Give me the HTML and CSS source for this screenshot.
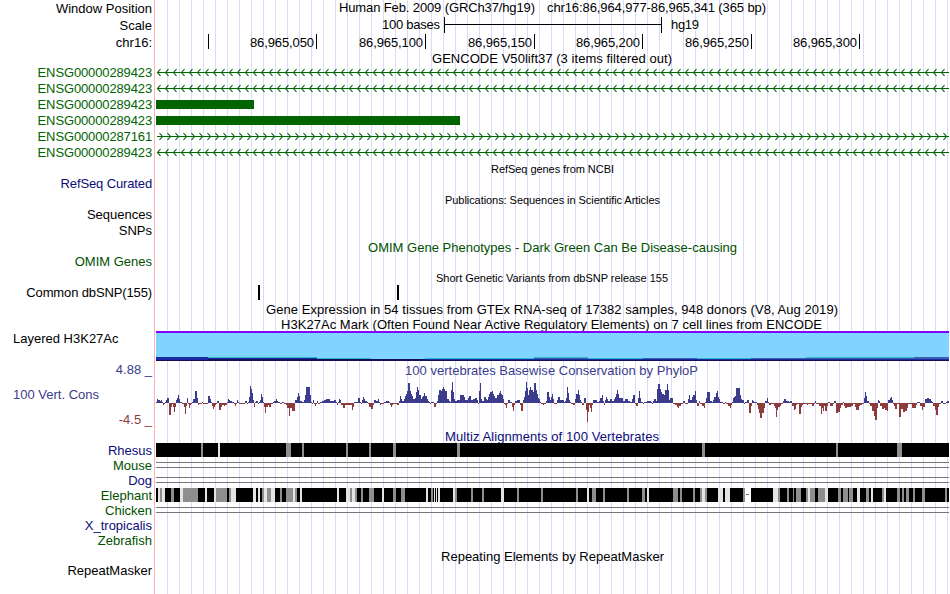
FILE: index.html
```
<!DOCTYPE html>
<html lang="en">
<head>
    <meta charset="UTF-8">
    <title>chr16:86,964,977-86,965,341</title>
    <link rel="stylesheet" href="styles.css">
</head>
<body>
    <!-- arrow patterns shared by the gene rows -->
    <svg class="defs">
        <defs>
            <pattern id="arrows-left" x="156" y="0" width="8" height="16" patternUnits="userSpaceOnUse">
                <path class="chevron" d="M4.5 5.2L1.5 8.5L4.5 11.8"/>
            </pattern>
            <pattern id="arrows-right" x="156" y="0" width="8" height="16" patternUnits="userSpaceOnUse">
                <path class="chevron" d="M3.5 5.2L6.5 8.5L3.5 11.8"/>
            </pattern>
        </defs>
    </svg>

    <div class="browser">
        <!-- position and ruler -->
        <div class="row h17"><div class="label down1">Window Position</div>
            <svg class="track" viewBox="156 0 793 17">
                <text x="339" y="12" textLength="196">Human Feb. 2009 (GRCh37/hg19)</text>
                <text x="547" y="12" textLength="219">chr16:86,964,977-86,965,341 (365 bp)</text>
            </svg>
        </div>
        <div class="row h16"><div class="label down1">Scale</div>
            <svg class="track" viewBox="156 17 793 16">
                <text x="382" y="29" textLength="58">100 bases</text>
                <path class="ink" d="M444 17h1v16h-1zM445 24h216v1h-216zM661 17h1v16h-1z"/>
                <text x="671" y="29" textLength="28">hg19</text>
            </svg>
        </div>
        <div class="row h18"><div class="label down2">chr16:</div>
            <svg class="track" viewBox="156 33 793 18">
                <path class="ink" d="M208 34h1v15h-1zM316 34h1v15h-1zM425 34h1v15h-1zM534 34h1v15h-1zM642 34h1v15h-1zM751 34h1v15h-1zM859 34h1v15h-1z"/>
                <text x="250" y="47" textLength="64">86,965,050</text>
                <text x="359" y="47" textLength="64">86,965,100</text>
                <text x="468" y="47" textLength="64">86,965,150</text>
                <text x="576" y="47" textLength="64">86,965,200</text>
                <text x="685" y="47" textLength="64">86,965,250</text>
                <text x="793" y="47" textLength="64">86,965,300</text>
            </svg>
        </div>

        <!-- GENCODE -->
        <div class="row h13"><div class="label"></div>
            <svg class="track" viewBox="156 51 793 13"><text x="432" y="63" textLength="240">GENCODE V50lift37 (3 items filtered out)</text></svg>
        </div>
        <div class="row h16"><div class="label gene tight down1">ENSG00000289423</div>
            <svg class="track" viewBox="156 0 793 16"><rect class="gene-line" x="157" y="8" width="792" height="1"/><rect x="156" width="793" height="16" fill="url(#arrows-left)"/></svg>
        </div>
        <div class="row h16"><div class="label gene tight down1">ENSG00000289423</div>
            <svg class="track" viewBox="156 0 793 16"><rect class="gene-line" x="157" y="8" width="792" height="1"/><rect x="156" width="793" height="16" fill="url(#arrows-left)"/></svg>
        </div>
        <div class="row h16"><div class="label gene tight down1">ENSG00000289423</div>
            <svg class="track" viewBox="156 0 793 16"><rect class="gene-line" x="156" y="4" width="98" height="9"/></svg>
        </div>
        <div class="row h16"><div class="label gene tight down1">ENSG00000289423</div>
            <svg class="track" viewBox="156 0 793 16"><rect class="gene-line" x="156" y="4" width="304" height="9"/></svg>
        </div>
        <div class="row h16"><div class="label gene tight down1">ENSG00000287161</div>
            <svg class="track" viewBox="156 0 793 16"><rect class="gene-line" x="157" y="8" width="792" height="1"/><rect x="156" width="793" height="16" fill="url(#arrows-right)"/></svg>
        </div>
        <div class="row h16"><div class="label gene tight down1">ENSG00000289423</div>
            <svg class="track" viewBox="156 0 793 16"><rect class="gene-line" x="157" y="8" width="792" height="1"/><rect x="156" width="793" height="16" fill="url(#arrows-left)"/></svg>
        </div>

        <!-- RefSeq, publications, OMIM -->
        <div class="row h16"><div class="label"></div>
            <svg class="track" viewBox="156 160 793 16"><text class="small" x="491" y="173" textLength="123">RefSeq genes from NCBI</text></svg>
        </div>
        <div class="row h15"><div class="label navy tight">RefSeq Curated</div><svg class="track"></svg></div>
        <div class="row h16"><div class="label"></div>
            <svg class="track" viewBox="156 191 793 16"><text class="small" x="445" y="204" textLength="215">Publications: Sequences in Scientific Articles</text></svg>
        </div>
        <div class="row h15"><div class="label">Sequences</div><svg class="track"></svg></div>
        <div class="row h16"><div class="label down1">SNPs</div><svg class="track"></svg></div>
        <div class="row h16"><div class="label"></div>
            <svg class="track" viewBox="156 238 793 16"><text class="omim" x="368" y="252" textLength="369">OMIM Gene Phenotypes - Dark Green Can Be Disease-causing</text></svg>
        </div>
        <div class="row h15"><div class="label omim">OMIM Genes</div><svg class="track"></svg></div>

        <!-- dbSNP -->
        <div class="row h16"><div class="label"></div>
            <svg class="track" viewBox="156 269 793 16"><text class="small" x="436" y="282" textLength="232">Short Genetic Variants from dbSNP release 155</text></svg>
        </div>
        <div class="row h16"><div class="label tight">Common dbSNP(155)</div>
            <svg class="track" viewBox="156 285 793 16"><path class="ink" d="M258 285h2v15h-2zM397 285h2v15h-2z"/></svg>
        </div>

        <!-- GTEx and H3K27Ac -->
        <div class="row h16"><div class="label"></div>
            <svg class="track" viewBox="156 301 793 16"><text x="266" y="314" textLength="572">Gene Expression in 54 tissues from GTEx RNA-seq of 17382 samples, 948 donors (V8, Aug 2019)</text></svg>
        </div>
        <div class="row h14"><div class="label"></div>
            <svg class="track" viewBox="156 317 793 14"><text x="281" y="329" textLength="541">H3K27Ac Mark (Often Found Near Active Regulatory Elements) on 7 cell lines from ENCODE</text></svg>
        </div>
        <div class="row h31"><div class="label side">Layered H3K27Ac</div>
            <svg class="track" viewBox="156 331 793 31">
                <rect x="156" y="331" width="793" height="30" fill="#80d4ff"/>
                <rect x="156" y="331" width="793" height="2" fill="#7f00ff"/>
                <path fill="#30b8c4" d="M208 357h109v1h-109zM317 358h54v1h-54zM425 358h109v1h-109zM534 357h54v1h-54zM588 358h55v1h-55zM697 358h54v1h-54zM806 357h108v1h-108z"/>
                <path fill="#3a5fae" d="M534 358h54v1h-54zM643 358h54v1h-54zM751 358h55v1h-55zM806 358h108v1h-108zM914 357h35v2h-35z"/>
                <path fill="#1a2aa6" d="M156 357h52v3h-52zM208 358h109v1h-109zM425 359h524v1h-524z"/>
                <path fill="#12105c" d="M208 359h217v1h-217zM156 360h793v1h-793z"/>
            </svg>
        </div>

        <!-- conservation -->
        <div class="row h69">
            <div class="label cons">
                <span class="max">4.88 _</span>
                <span class="name">100 Vert. Cons</span>
                <span class="min">-4.5 _</span>
            </div>
            <svg class="track" viewBox="156 362 793 69">
                <text class="wiggle-title" x="405" y="375" textLength="293">100 vertebrates Basewise Conservation by PhyloP</text>
                <path id="cons-up" fill="#3c3c8c"/>
                <path id="cons-down" fill="#8c3c3c"/>
            </svg>
        </div>

        <!-- multiz alignment -->
        <div class="row h12"><div class="label"></div>
            <svg class="track" viewBox="156 431 793 12"><text class="navy" x="445" y="441" textLength="214">Multiz Alignments of 100 Vertebrates</text></svg>
        </div>
        <div class="row h15"><div class="label navy">Rhesus</div><svg class="track" id="rhesus" viewBox="156 0 793 15"></svg></div>
        <div class="row h15"><div class="label omim">Mouse</div>
            <svg class="track" viewBox="156 458 793 15"><path class="gap" d="M156 462h793v1h-793zM156 467h793v1h-793z"/></svg>
        </div>
        <div class="row h15"><div class="label navy">Dog</div>
            <svg class="track" viewBox="156 473 793 15"><path class="gap" d="M156 477h793v1h-793zM156 482h793v1h-793z"/></svg>
        </div>
        <div class="row h15"><div class="label omim">Elephant</div><svg class="track" id="elephant" viewBox="156 0 793 15"></svg></div>
        <div class="row h15"><div class="label omim">Chicken</div>
            <svg class="track" viewBox="156 503 793 15"><path class="gap" d="M156 507h793v1h-793zM156 512h793v1h-793z"/></svg>
        </div>
        <div class="row h15"><div class="label navy">X_tropicalis</div><svg class="track"></svg></div>
        <div class="row h15"><div class="label omim">Zebrafish</div><svg class="track"></svg></div>

        <!-- RepeatMasker -->
        <div class="row h15"><div class="label"></div>
            <svg class="track" viewBox="156 548 793 15"><text x="441" y="561" textLength="223">Repeating Elements by RepeatMasker</text></svg>
        </div>
        <div class="row h31"><div class="label">RepeatMasker</div><svg class="track"></svg></div>
    </div>

    <script src="tracks.js"></script>
</body>
</html>
```
FILE: styles.css
```
* {
    margin: 0;
    padding: 0;
    box-sizing: border-box;
}

body {
    background: #fff;
    color: #000;
    font-family: "Liberation Sans", Arial, Helvetica, sans-serif;
    font-size: 13px;
    overflow: hidden;
}

.defs {
    display: block;
    width: 0;
    height: 0;
}

/* vertical guide lines every 12px behind the tracks */
.browser {
    display: flex;
    flex-direction: column;
    width: 949px;
    height: 594px;
    background: repeating-linear-gradient(to right, transparent 0 11px, #dadafa 11px 12px) 156px 0 / 793px 594px no-repeat;
}

.row {
    display: flex;
    flex: none;
}

/* row heights */
.h12 { height: 12px; }
.h13 { height: 13px; }
.h14 { height: 14px; }
.h15 { height: 15px; }
.h16 { height: 16px; }
.h17 { height: 17px; }
.h18 { height: 18px; }
.h31 { height: 31px; }
.h69 { height: 69px; }

.label {
    width: 155px;
    padding-right: 2px;
    border-right: 1px solid #ffb4b4;
    line-height: 16px;
    text-align: right;
    white-space: nowrap;
}

.label.side {
    padding-left: 13px;
    text-align: left;
}

.label.tight { letter-spacing: -0.13px; }
.label.down1 { line-height: 18px; }
.label.down2 { line-height: 20px; }

.track {
    display: block;
    width: 793px;
    height: 100%;
    margin-left: 1px;
    overflow: visible;
}

.track text {
    font-size: 13px;
}

.track .small {
    font-size: 11px;
}

.ink { fill: #000; }
.gap { fill: #777; }

.gene { color: #006400; }
.gene-line { fill: #006400; }

.chevron {
    fill: none;
    stroke: #006400;
    stroke-width: 1.1;
}

.navy {
    color: #0c0c78;
    fill: #0c0c78;
}

.omim {
    color: #005000;
    fill: #005000;
}

.wiggle-title { fill: #3c3c8c; }

/* conservation labels */
.cons {
    display: flex;
    flex-direction: column;
    color: #3c3c8c;
}

.cons .name {
    padding: 9px 0 9px 13px;
    text-align: left;
}

.cons .min {
    color: #8c3c3c;
}
```
FILE: tracks.js
```
// PhyloP steps: [origin, end, "offset:height ..."], offsets in thirds of a pixel
const steps = [
    [150, 350, "18:1 21:4 24:3 30:2 33:3 36:1 39:-2 42:-1 45:1 48:3 51:5 57:-12 63:-4 66:-1 69:-4 72:-9 75:-4 78:3 81:5 84:8 87:4 90:1 96:-1 102:-4 105:-11 108:-3 111:5 114:-1 117:-5 120:-2 123:-1 126:1 129:4 135:12 141:5 144:-2 147:-1 156:1 159:-1 174:7 180:4 183:1 186:-3 189:-6 192:-4 195:-2 198:-1 201:2 207:-7 213:-4 216:-2 222:-3 225:-2 231:1 234:4 237:3 240:2 246:1 252:-1 255:-3 258:-1 261:3 264:1 267:-1 285:2 291:-1 294:1 297:6 300:17 303:14 306:10 309:3 312:-4 315:1 318:2 324:-1 327:1 330:3 333:9 336:6 339:1 342:-4 345:-10 348:-4 354:-2 357:-4 363:-1 369:1 372:2 378:4 381:2 384:1 390:-1 396:1 402:-1 408:-2 411:-5 417:-13 420:-5 426:-8 435:3 441:6 444:10 447:7 450:2 456:1 462:3 465:8 468:16 480:8 483:1 486:-1 489:3 492:-1 495:-3 498:-1 501:2 504:-1 510:1 516:2 522:3 528:4 540:2 552:3 558:1 561:-2 564:1 567:4 570:3 573:-2 579:-5 585:-2"],
    [350, 550, "0:-2 6:-7 9:-4 12:1 24:5 30:1 33:-1 36:3 39:6 42:4 45:2 51:1 54:-1 57:-4 63:-6 69:-2 72:3 78:2 84:4 87:1 90:-2 93:-1 102:1 108:2 117:1 120:-2 123:-4 126:-2 129:-1 141:-2 147:2 150:7 153:4 156:2 162:4 165:7 168:9 171:12 174:20 180:12 183:9 186:7 189:4 195:5 198:11 201:16 204:13 207:8 213:4 216:6 219:7 222:10 225:7 231:4 234:2 237:1 240:-1 243:1 252:-4 258:-1 261:2 264:8 267:13 273:12 276:14 279:16 282:14 285:12 291:4 297:2 300:1 303:13 306:21 309:11 312:4 315:2 321:3 330:8 342:6 345:3 354:5 357:7 363:3 369:4 375:5 381:3 384:-1 387:12 390:20 393:4 396:2 402:6 408:4 411:3 414:6 417:9 420:11 426:12 429:9 432:7 435:5 441:8 447:10 450:12 453:9 456:8 459:4 462:-1 465:-2 468:-5 471:-1 474:3 480:1 486:-4 489:-8 492:-2 495:2 501:3 510:-2 513:-8 519:3 522:6 525:12 528:21 531:15 534:8 537:13 540:16 543:13 549:11 552:20 558:13 561:9 564:5 567:4 570:1 573:-1 579:-2 582:-1 588:2 591:11 597:6"],
    [550, 750, "0:3 3:6 6:9 9:4 12:-1 21:3 24:6 30:3 42:1 45:2 48:5 51:16 54:10 57:3 60:1 63:-1 69:-2 75:4 78:9 84:13 87:8 90:3 93:1 96:-2 102:5 108:-7 111:-19 114:-9 117:-2 120:-5 123:-9 126:-2 129:3 141:1 147:2 150:5 156:8 159:2 162:-2 165:3 168:6 171:4 174:2 180:4 186:2 192:4 195:6 198:9 201:13 204:9 207:5 219:2 225:4 234:2 240:1 246:4 249:8 255:-1 258:-3 264:5 267:12 270:5 273:1 279:-1 282:1 291:2 303:1 306:-1 309:2 312:4 318:2 321:14 324:19 330:14 333:11 336:9 342:8 345:13 351:19 354:13 357:3 360:5 369:-1 375:-2 381:-4 384:-5 387:-3 393:-1 399:2 405:-1 414:4 417:8 420:3 426:6 429:8 435:12 438:3 441:-3 447:2 450:-1 456:-3 462:-5 465:1 468:5 471:11 480:2 486:1 489:3 492:6 498:10 501:12 504:6 507:4 510:1 519:-1 525:1 528:-1 534:-3 540:-5 543:-2 546:1 549:5 552:6 555:7 558:15 570:8 573:4 576:3 582:-1 585:1 591:3 597:-10"],
    [750, 949, "0:-10 3:-3 6:3 9:2 12:1 21:-2 24:-6 27:-10 30:-15 36:-10 42:-5 45:2 51:5 54:1 57:-2 63:-1 72:-3 75:-5 78:-14 81:-7 84:-4 90:-3 93:-1 99:2 102:4 108:2 117:1 120:2 126:-3 132:-7 135:-6 138:-2 141:-1 147:-11 153:-4 156:-2 159:-1 171:-2 174:-1 186:-3 192:-1 195:2 198:-1 207:-3 213:-11 216:-5 219:-8 222:-3 225:-8 231:-3 234:1 240:-3 249:-1 252:2 258:-10 264:-9 270:-5 273:-2 279:1 282:-3 285:-5 291:-4 303:-3 309:-1 315:-4 318:-7 327:-3 330:-2 336:-1 342:5 345:11 348:7 351:2 357:-1 360:-3 366:-8 372:-13 375:-17 381:-5 384:3 387:2 390:-3 396:-6 402:-5 405:-7 411:-8 414:3 420:5 423:6 426:3 429:-1 432:-3 435:-6 441:-1 447:-14 453:-6 459:-9 465:-8 471:-5 474:-1 486:-5 498:-2 501:1 510:-3 516:-7 519:-4 525:4 531:5 537:4 543:2 546:1 549:-3 555:-7 558:-12 564:-4 567:-1 573:2 579:-1 588:1 591:2"]
];
const zero = 403;

let up = "";
let down = "";
steps.forEach(([origin, end, text]) => {
    const list = text.split(" ").map(s => s.split(":").map(Number));
    list.forEach(([offset, h], i) => {
        const x = origin + offset / 3;
        const next = i + 1 < list.length ? origin + list[i + 1][0] / 3 : end;
        if (h > 0) {
            up += `M${x} ${zero}V${zero - h}H${next}V${zero}z`;
        } else {
            down += `M${x} ${zero}V${zero - h}H${next}V${zero}z`;
        }
    });
});
document.getElementById("cons-up").setAttribute("d", up);
document.getElementById("cons-down").setAttribute("d", down);

// alignment blocks: black bar, then start-end pairs in g (gray), l (light), w (no data)
const colors = { g: "#8e8e8e", l: "#e4e4e4", w: "#ffffff" };

function drawAlignment(id, groups) {
    let html = `<rect x="156" y="0" width="793" height="14"/>`;
    groups.forEach(([origin, text]) => {
        text.split(" ").forEach(item => {
            const [from, to] = item.slice(1).split("-").map(Number);
            html += `<rect x="${origin + from / 3}" y="0" width="${(to - from) / 3}" height="14" fill="${colors[item[0]]}"/>`;
        });
    });
    document.getElementById(id).innerHTML = html;
}

drawAlignment("rhesus", [
    [150, "g153-159 l204-210 g408-423 g456-462 g588-594 g657-663 g729-738"],
    [420, "g111-120"],
    [690, "g36-45 g438-444 g621-636"]
]);
drawAlignment("elephant", [
    [150, "l24-30 g30-36 l36-45 g63-72 l90-99 g99-144 l165-171 l192-198 g198-231 g237-243 l243-258 l309-318 l324-330 g336-342 l342-351 g351-363 l363-375 g390-396 g408-429 l429-435 g435-441 l450-456 l561-567 l588-600 g600-606 l606-615 g615-621 g633-639 g657-672 l696-702 g729-738 g753-765"],
    [420, "l18-24 g33-39 l42-45 l48-51 l54-60 l99-105 g105-111 g153-159 g186-192 l243-252 g291-297 g363-369 g468-474 l501-507 g516-528 g549-555 g621-627 g666-675 l681-687 g759-774 g780-786"],
    [690, "g9-15 g30-36 l36-45 g45-51 l84-99 l105-120 g159-165 w165-183 l249-264 g264-270 g291-297 g309-312 g318-333 g348-354 l354-360 g360-375 g384-405 l405-414 g444-453 g459-474 g477-489 l501-510 g528-537 l543-549 g576-582 l582-588 g621-630 g636-642 g648-657 g669-675 g696-705 g765-771"]
]);
// short dash inside the unaligned stretch
document.getElementById("elephant").innerHTML += `<rect x="746" y="6" width="3" height="1" fill="#777"/>`;
```
